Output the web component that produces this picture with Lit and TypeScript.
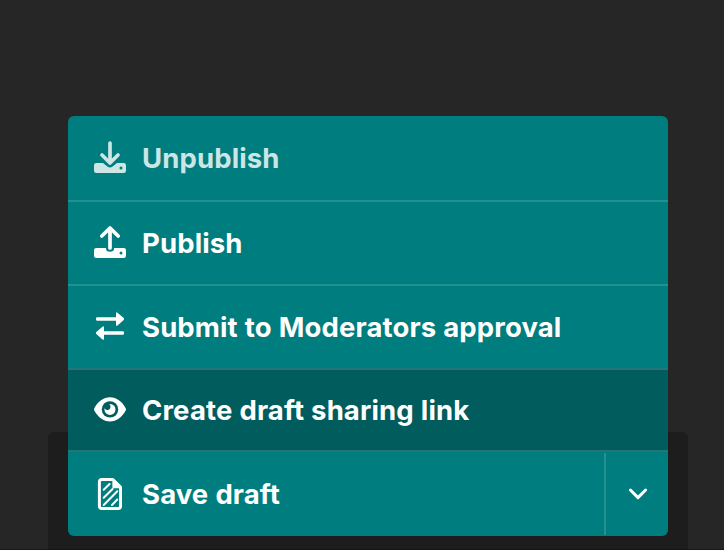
import { LitElement, html, css, svg, nothing } from "lit";
import { customElement, property } from "lit/decorators.js";

const icons: Record<string, unknown> = {
  unpublish: svg`
    <path fill="currentColor" d="M2.200 21H9l4.400 3.600q2.600 2 5.200 0L23 21h6.800q2.200 0 2.200 2.200v5.600q0 2.200-2.200 2.200H2.200Q0 31 0 28.800v-5.600Q0 21 2.200 21z"/>
    <path class="halo" d="M8 13l8 8 8-8"/>
    <path class="arrow" d="M16 1v20M8 13l8 8 8-8"/>
    <circle class="hole" cx="27" cy="26" r="1.500"/>`,
  publish: svg`
    <path fill="currentColor" d="M2.200 21H12v.8q0 3 4 3t4-3V21h9.800q2.200 0 2.200 2.200v5.600q0 2.200-2.200 2.200H2.200Q0 31 0 28.800v-5.600Q0 21 2.200 21z"/>
    <path class="arrow" d="M16 21V1M7.800 9L16 1l8.200 8"/>
    <circle class="hole" cx="27" cy="26" r="1.500"/>`,
  swap: svg`
    <path fill="currentColor" d="M3.200 6.200H22V2.300q0-1.900 1.500-.6l6.200 5.400q.9.900 0 1.800l-6.200 5.500Q22 15.600 22 13.700V9.800H3.200Q2 9.800 2 8.600V7.400Q2 6.200 3.200 6.200z"/>
    <path fill="currentColor" d="M28.800 20.200H10V16.300q0-1.900-1.500-.6l-6.200 5.400q-.9.900 0 1.800l6.200 5.500Q10 29.600 10 27.700v-3.900h18.800q1.200 0 1.200-1.200v-1.200q0-1.200-1.200-1.200z"/>`,
  eye: svg`
    <g transform="translate(0 -.6)">
      <path fill="currentColor" d="M.3 14.800C4 8 9.500 3.900 16 3.900S28 8 31.700 14.800q.6 1.200 0 2.400C28 24 22.500 28.100 16 28.100S4 24 .3 17.200q-.6-1.200 0-2.400z"/>
      <circle class="hole" cx="16" cy="16" r="8.200"/>
      <circle fill="currentColor" cx="16" cy="16" r="5.500"/>
      <circle class="hole" cx="13.400" cy="13.400" r="3.100"/>
    </g>`,
  draft: svg`
    <g transform="translate(.4 0)">
      <path class="sheet" d="M7.200 1.500H18.500L26.100 9.100V28.300a2.200 2.200 0 0 1-2.200 2.200H7.200A2.200 2.200 0 0 1 5 28.300V3.700A2.200 2.200 0 0 1 7.200 1.500z"/>
      <path fill="currentColor" d="M18 1.500v8.700h8.100v-1L19 1.500z"/>
      <path class="hatch" d="M9.300 11.800L15.200 6M9.300 19.800L18.200 11M9.300 27L22.900 13.300M17.600 27l5.300-5.500"/>
    </g>`,
  chevron: svg`<path class="tick" d="M9.400 12l7.600 7.600 7.600-7.600"/>`,
};

@customElement("ui-icon")
class UiIcon extends LitElement {
  @property() name = "";

  static styles = css`
    :host { display: block; width: 32px; height: 32px; flex: none; }
    svg { display: block; overflow: visible; }
    path { stroke-linejoin: round; stroke-linecap: round; }
    .arrow { fill: none; stroke: currentColor; stroke-width: 3.7; }
    .tick { fill: none; stroke: currentColor; stroke-width: 3; }
    .halo { fill: none; stroke: var(--surface); stroke-width: 6.4; }
    .hole { fill: var(--surface); }
    .sheet { fill: none; stroke: currentColor; stroke-width: 3; }
    .hatch { fill: none; stroke: currentColor; stroke-width: 2; }
  `;

  render() {
    return html`<svg width="32" height="32" viewBox="0 0 32 32">${icons[this.name] ?? nothing}</svg>`;
  }
}

interface Action { icon: string; label: string; kind: string; }

const actions: Action[] = [
  { icon: "unpublish", label: "Unpublish", kind: "disabled" },
  { icon: "publish", label: "Publish", kind: "plain" },
  { icon: "swap", label: "Submit to Moderators approval", kind: "submit" },
  { icon: "eye", label: "Create draft sharing link", kind: "active" },
];

@customElement("app-root")
class AppRoot extends LitElement {
  static styles = css`
    :host {
      --surface: #007d7e;
      display: flex;
      flex-direction: column;
      align-items: center;
      position: relative;
      box-sizing: border-box;
      width: 724px;
      height: 550px;
      padding: 116px 0 0 12px;
      overflow: hidden;
      background: #262626;
      color: #fff;
      font: 700 27.5px/34px Inter, "Liberation Sans", sans-serif;
      letter-spacing: 0.12px;
      word-spacing: 0.4px;
    }
    .footer {
      position: absolute;
      left: 48px;
      top: 432px;
      width: 640px;
      height: 118px;
      border-radius: 6px 6px 0 0;
      background: #1d1d1d;
    }
    .edge { position: absolute; left: 0; right: 0; bottom: 0; height: 1px; background: #161616; }
    .menu {
      position: relative;
      width: 600px;
      height: 420px;
      display: flex;
      flex-direction: column;
      border-radius: 6px;
      overflow: hidden;
      background: var(--surface);
    }
    button {
      all: unset;
      box-sizing: border-box;
      display: flex;
      align-items: center;
      gap: 16px;
      padding-left: 26px;
      white-space: nowrap;
    }
    .item { height: 84px; border-top: 2px solid #269091; }
    .item:first-child { border-top: 0; }
    .disabled .icon, .disabled .label { opacity: 0.8; }
    .active { --surface: #005c5d; height: 82px; background: var(--surface); border-top-color: #267475; }
    .split { display: flex; height: 86px; box-sizing: border-box; border-top: 2px solid #267475; }
    .save { flex: 1; height: 84px; }
    .toggle {
      width: 64px;
      height: 82px;
      margin-top: 1px;
      border-left: 2px solid #269091;
      padding: 0;
      justify-content: center;
    }
  `;

  render() {
    return html`
      <div class="footer"></div>
      <div class="edge"></div>
      <div class="menu">
        ${actions.map((a) => html`
          <button class="item ${a.kind}">
            <ui-icon class="icon" name=${a.icon}></ui-icon>
            <span class="label">${a.label}</span>
          </button>`)}
        <div class="split">
          <button class="save">
            <ui-icon name="draft"></ui-icon>
            <span class="label">Save draft</span>
          </button>
          <button class="toggle" aria-label="More actions"><ui-icon name="chevron"></ui-icon></button>
        </div>
      </div>
    `;
  }
}
